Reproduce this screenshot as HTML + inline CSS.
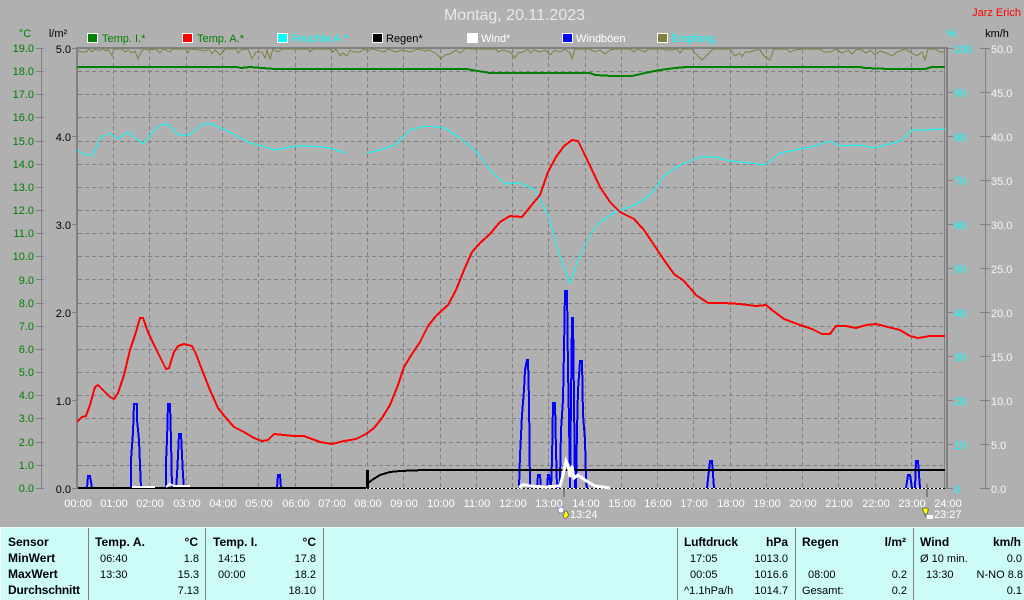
<!DOCTYPE html>
<html><head><meta charset="utf-8"><style>
html,body{margin:0;padding:0;background:#b0b0b0;width:1024px;height:600px;overflow:hidden}
svg{display:block;position:absolute;left:0;top:0}
text{font-family:"Liberation Sans",sans-serif;font-size:11px}
.g{fill:#008000}.c{fill:#00ffff}.w{fill:#fff}.k{fill:#000}.e{text-anchor:end}.m{text-anchor:middle}
.b{font-weight:bold;font-size:12px}
polyline,.cr{shape-rendering:crispEdges}
</style></head><body>
<svg width="1024" height="600" viewBox="0 0 1024 600">
<rect width="1024" height="600" fill="#b0b0b0"/>
<text x="514.5" y="20" class="m" style="font-size:16px" fill="#e8e8e8" textLength="141">Montag, 20.11.2023</text>
<text x="1021" y="16" class="e" fill="#ff0000">Jarz Erich</text>
<!-- units -->
<text x="25" y="37" class="m g">°C</text><text x="58" y="37" class="m k">l/m²</text>
<text x="951" y="37" class="m c">%</text><text x="997" y="37" class="m k" style="fill:#000">km/h</text>
<!-- legend -->
<g stroke="#fff" stroke-width="1">
<rect x="87.5" y="33.5" width="10" height="9" fill="#008000"/>
<rect x="182.5" y="33.5" width="10" height="9" fill="#ff0000"/>
<rect x="277.5" y="33.5" width="10" height="9" fill="#00ffff"/>
<rect x="372.5" y="33.5" width="10" height="9" fill="#000"/>
<rect x="467.5" y="33.5" width="10" height="9" fill="#fff"/>
<rect x="562.5" y="33.5" width="10" height="9" fill="#0000ff"/>
<rect x="657.5" y="33.5" width="10" height="9" fill="#808040"/>
</g>
<text x="102" y="42" class="g">Temp. I.*</text><text x="197" y="42" class="g">Temp. A.*</text>
<text x="291" y="42" class="c">Feuchte A.*</text><text x="386" y="42" class="k">Regen*</text>
<text x="481" y="42" class="w">Wind*</text><text x="576" y="42" class="w">Windböen</text>
<text x="671" y="42" class="c">Empfang</text>
<!-- grid -->
<g stroke="#808080" stroke-width="1" stroke-dasharray="4 3" shape-rendering="crispEdges" fill="none">
<path d="M78 71.5H944M78 94.5H944M78 117.5H944M78 141.5H944M78 164.5H944M78 187.5H944M78 210.5H944M78 233.5H944M78 256.5H944M78 279.5H944M78 303.5H944M78 326.5H944M78 349.5H944M78 372.5H944M78 395.5H944M78 418.5H944M78 442.5H944M78 465.5H944"/>
<path d="M113.5 49V488M149.5 49V488M186.5 49V488M222.5 49V488M258.5 49V488M295.5 49V488M331.5 49V488M367.5 49V488M403.5 49V488M440.5 49V488M476.5 49V488M512.5 49V488M548.5 49V488M585.5 49V488M621.5 49V488M657.5 49V488M693.5 49V488M730.5 49V488M766.5 49V488M802.5 49V488M838.5 49V488M875.5 49V488M911.5 49V488"/>
</g>
<g fill="#808080" shape-rendering="crispEdges">
<rect x="76" y="47" width="870" height="2"/>
<rect x="76" y="47" width="2" height="442"/>
<rect x="946" y="47" width="2" height="442"/>
<rect x="944" y="47" width="1" height="442"/>
<rect x="41" y="48" width="1" height="440"/>
<rect x="985" y="48" width="1" height="440"/>
<rect x="563" y="488" width="2" height="9"/>
<rect x="926" y="484" width="2" height="13"/>
</g>
<path stroke="#808080" stroke-width="1" shape-rendering="crispEdges" fill="none" d="M36 48.5H44M36 71.5H44M36 94.5H44M36 117.5H44M36 141.5H44M36 164.5H44M36 187.5H44M36 210.5H44M36 233.5H44M36 256.5H44M36 279.5H44M36 303.5H44M36 326.5H44M36 349.5H44M36 372.5H44M36 395.5H44M36 418.5H44M36 442.5H44M36 465.5H44M36 488.5H44M72 48.5H76M72 136.5H76M72 224.5H76M72 312.5H76M72 400.5H76M72 488.5H76M948 48.5H953M948 92.5H953M948 136.5H953M948 180.5H953M948 224.5H953M948 268.5H953M948 312.5H953M948 356.5H953M948 400.5H953M948 444.5H953M948 488.5H953M980 48.5H990M980 92.5H990M980 136.5H990M980 180.5H990M980 224.5H990M980 268.5H990M980 312.5H990M980 356.5H990M980 400.5H990M980 444.5H990M980 488.5H990"/>
<!-- left temp labels -->
<g class="g e">
<text x="34" y="52">19.0</text><text x="34" y="75">18.0</text><text x="34" y="98">17.0</text><text x="34" y="121">16.0</text><text x="34" y="145">15.0</text><text x="34" y="168">14.0</text><text x="34" y="191">13.0</text><text x="34" y="214">12.0</text><text x="34" y="237">11.0</text><text x="34" y="260">10.0</text><text x="34" y="284">9.0</text><text x="34" y="307">8.0</text><text x="34" y="330">7.0</text><text x="34" y="353">6.0</text><text x="34" y="376">5.0</text><text x="34" y="399">4.0</text><text x="34" y="422">3.0</text><text x="34" y="446">2.0</text><text x="34" y="469">1.0</text><text x="34" y="492">0.0</text>
</g>
<g class="k e">
<text x="71" y="53">5.0</text><text x="71" y="141">4.0</text><text x="71" y="229">3.0</text><text x="71" y="317">2.0</text><text x="71" y="405">1.0</text><text x="71" y="493">0.0</text>
</g>
<g class="c">
<text x="954" y="53">100</text><text x="954" y="97">90</text><text x="954" y="141">80</text><text x="954" y="185">70</text><text x="954" y="229">60</text><text x="954" y="273">50</text><text x="954" y="317">40</text><text x="954" y="361">30</text><text x="954" y="405">20</text><text x="954" y="449">10</text><text x="954" y="493">0</text>
</g>
<g fill="#f4f4f4">
<text x="991" y="53">50.0</text><text x="991" y="97">45.0</text><text x="991" y="141">40.0</text><text x="991" y="185">35.0</text><text x="991" y="229">30.0</text><text x="991" y="273">25.0</text><text x="991" y="317">20.0</text><text x="991" y="361">15.0</text><text x="991" y="405">10.0</text><text x="991" y="449">5.0</text><text x="991" y="493">0.0</text>
</g>
<g class="w m">
<text x="78" y="507">00:00</text><text x="114" y="507">01:00</text><text x="150" y="507">02:00</text><text x="187" y="507">03:00</text><text x="223" y="507">04:00</text><text x="259" y="507">05:00</text><text x="296" y="507">06:00</text><text x="332" y="507">07:00</text><text x="368" y="507">08:00</text><text x="404" y="507">09:00</text><text x="441" y="507">10:00</text><text x="477" y="507">11:00</text><text x="513" y="507">12:00</text><text x="549" y="507">13:00</text><text x="586" y="507">14:00</text><text x="622" y="507">15:00</text><text x="658" y="507">16:00</text><text x="694" y="507">17:00</text><text x="731" y="507">18:00</text><text x="767" y="507">19:00</text><text x="803" y="507">20:00</text><text x="839" y="507">21:00</text><text x="876" y="507">22:00</text><text x="912" y="507">23:00</text><text x="948" y="507">24:00</text>
</g>
<text x="570" y="518" class="w">13:24</text><text x="934" y="518" class="w">23:27</text>
<!-- icons -->
<g>
<circle cx="561" cy="510" r="3" fill="#fff" stroke="#8888cc" stroke-width="1"/>
<path d="M563 517L565 511L567 511L568 514L569 514L566 519Z" fill="#ffff00" stroke="#222" stroke-width=".5"/>
<path d="M923 508H928V511L927 514H925L923 511ZM925 514V517" fill="#ffff00" stroke="#333" stroke-width=".6"/>
<rect x="927" y="515" width="6" height="4" fill="#fff"/>
</g>
<!-- Empfang -->
<polyline fill="none" stroke="#808040" stroke-width="1" points="78,50 80,52 86,52 89,49 92,52 95,49 99,51 103,49 106,51 108,49 112,56 114,49 122,49 125,52 128,50 132,53 135,51 138,59 141,52 144,49 148,50 156,49 160,53 163,49 166,50 170,52 172,49 186,49 188,53 190,49 200,50 205,51 209,49 212,54 215,50 220,55 223,52 225,49 236,49 238,53 241,50 248,49 252,59 256,52 262,52 265,58 267,50 270,59 273,49 278,52 282,49 308,49 310,52 313,49 330,49 333,52 336,49 340,56 343,53 347,56 350,50 354,52 360,52 364,49 368,51 372,49 384,52 388,49 396,52 402,50 410,52 418,49 425,51 430,50 438,55 441,59 445,55 450,54 456,50 460,53 466,48 470,49 496,49 498,52 503,50 510,52 515,58 518,53 523,52 528,49 530,53 534,50 540,52 545,50 550,55 555,50 560,52 565,49 570,53 572,59 575,49 590,49 595,52 600,50 605,54 610,50 615,49 630,49 634,52 637,49 645,52 648,49 662,49 665,50 672,50 677,49 680,53 683,49 692,49 695,53 702,60 708,54 713,49 730,49 735,56 740,53 742,57 745,52 750,52 756,50 760,50 764,56 770,60 774,49 786,49 790,52 795,50 803,49 820,49 824,52 830,52 836,49 842,53 848,50 852,54 856,50 860,49 866,53 870,50 875,55 880,51 886,53 892,56 897,52 905,49 912,53 917,56 922,52 925,60 928,49 935,49 940,52 945,52"/>
<!-- humidity -->
<polyline fill="none" stroke="#00ffff" stroke-width="1" points="77,150 85,155 93,155 100,138 110,133 118,139 128,132 135,138 143,144 150,135 160,125 168,124 178,135 190,135 202,124 212,124 230,132 250,143 262,146 275,150 295,146 310,146 330,148 345,153"/>
<polyline fill="none" stroke="#00ffff" stroke-width="1" points="367,153 380,150 395,145 410,130 425,126 445,128 460,138 475,150 490,170 505,184 520,183 535,190 548,215 558,250 570,283 580,255 590,235 600,222 615,212 635,205 650,195 665,175 680,165 700,157 715,157 730,161 750,163 765,165 780,153 800,149 815,146 829,141 840,146 860,145 875,148 900,141 912,130 925,130 945,129"/>
<!-- temp I -->
<polyline fill="none" stroke="#008000" stroke-width="2" points="77,67 237,67 241,68 250,67 262,68 276,69 466,69 478,71 490,73 590,73 595,75 612,76 632,76 645,73 660,70 675,68 686,67 860,67 865,68 890,69 925,69 932,67 945,67"/>
<!-- temp A -->
<polyline fill="none" stroke="#ff0000" stroke-width="2" points="77,422 82,417 86,416 90,405 95,387 98,385 104,391 110,397 114,399 118,393 124,375 130,350 136,332 140,318 143,318 148,332 155,347 162,361 166,369 169,368 174,352 178,346 184,344 192,346 196,354 202,370 210,390 218,408 226,418 234,427 244,432 254,438 262,441 268,440 274,434 284,435 294,436 304,436 312,439 320,442 332,444 344,441 356,439 366,434 374,428 382,418 390,405 398,385 404,367 412,354 420,342 428,326 436,316 448,305 456,290 464,270 472,252 480,243 490,234 500,222 510,216 522,217 530,207 540,195 548,172 556,157 564,146 572,140 578,141 584,153 592,170 600,187 610,202 620,212 634,219 644,230 654,245 664,260 674,274 684,281 696,295 708,303 724,303 740,304 756,306 766,305 772,310 784,319 800,325 812,329 822,334 830,334 836,326 846,326 856,328 866,325 876,324 888,327 900,330 910,336 918,338 930,336 945,336"/>
<!-- gusts -->
<path class="cr" fill="none" stroke="#0000ff" stroke-width="2" d="M87 488L88 476H90L92 488M131 488V460L133 432L134 404H137L137 420L139 440L140 465L141 488M166 488V462L167 440L168 404H170L171 440L172 488M176 488L177 475L178 455L179 434H181L182 455L183 475L184 488M277 488L278 475H280L281 488M519 488L520 455L522 415L524 390L525 370L527 360H528L529 400L530 488M537 488L538 475H540L541 488M547 488L548 475H549L551 488L552 460L553 403H555L556 450L557 488M559 488L560 480L561 430L563 400L564 350L565 291H567L568 370L569 420L570 488M570 488L571 400L572 318H573L574 400L575 488M576 488L577 430L578 390L580 361H582L583 415L585 440L586 480L587 488M707 488L710 461H712L714 488M906 488L908 475H910L912 488M915 488L916 461H918L920 488"/>
<!-- rain -->
<path class="cr" d="M78 488H366" stroke="#000" stroke-width="2" fill="none"/>
<path class="cr" d="M367 488.5H945" stroke="#fff" stroke-width="1" fill="none"/>
<path class="cr" d="M367 488.5H945" stroke="#000" stroke-width="1" stroke-dasharray="2 2" fill="none"/>
<polyline fill="none" stroke="#000" stroke-width="2" points="367,484 372,480 380,475 390,472 400,471 424,470 945,470"/>
<rect x="366" y="470" width="3" height="18" fill="#000"/>
<!-- wind -->
<path fill="none" stroke="#fff" stroke-width="2" class="cr" d="M132 487H155M166 487L170 484L174 486H190"/>
<path fill="none" stroke="#fff" stroke-width="3" class="cr" d="M519 488L522 485H526L530 486L545 487L560 486L563 475L566 461L568 465L570 477L572 466L574 478L578 475L585 480L595 486L610 488"/>
<!-- panel -->
<rect x="0" y="527" width="1024" height="73" fill="#ccfbf8"/>
<rect x="0" y="527" width="1024" height="1" fill="#e8fdfc"/>
<rect x="0" y="527" width="1" height="73" fill="#fff"/>
<g fill="#808080" shape-rendering="crispEdges">
<rect x="88" y="528" width="1" height="72"/><rect x="205" y="528" width="1" height="72"/><rect x="323" y="528" width="1" height="72"/><rect x="677" y="528" width="1" height="72"/><rect x="795" y="528" width="1" height="72"/><rect x="913" y="528" width="1" height="72"/>
</g>
<g class="k">
<text x="8" y="546" class="b">Sensor</text><text x="8" y="562" class="b">MinWert</text><text x="8" y="578" class="b">MaxWert</text><text x="8" y="594" class="b" textLength="72">Durchschnitt</text>
<text x="95" y="546" class="b" textLength="50">Temp. A.</text><text x="198" y="546" class="e b">°C</text>
<text x="213" y="546" class="b">Temp. I.</text><text x="316" y="546" class="e b">°C</text>
<text x="684" y="546" class="b" textLength="54">Luftdruck</text><text x="788" y="546" class="e b">hPa</text>
<text x="802" y="546" class="b">Regen</text><text x="906" y="546" class="e b">l/m²</text>
<text x="920" y="546" class="b">Wind</text><text x="1021" y="546" class="e b">km/h</text>
<text x="100" y="562">06:40</text><text x="199" y="562" class="e">1.8</text>
<text x="100" y="578">13:30</text><text x="199" y="578" class="e">15.3</text>
<text x="199" y="594" class="e">7.13</text>
<text x="218" y="562">14:15</text><text x="316" y="562" class="e">17.8</text>
<text x="218" y="578">00:00</text><text x="316" y="578" class="e">18.2</text>
<text x="316" y="594" class="e">18.10</text>
<text x="690" y="562">17:05</text><text x="788" y="562" class="e">1013.0</text>
<text x="690" y="578">00:05</text><text x="788" y="578" class="e">1016.6</text>
<text x="684" y="594">^1.1hPa/h</text><text x="788" y="594" class="e">1014.7</text>
<text x="808" y="578">08:00</text><text x="907" y="578" class="e">0.2</text>
<text x="802" y="594">Gesamt:</text><text x="907" y="594" class="e">0.2</text>
<text x="920" y="562">Ø 10 min.</text><text x="1022" y="562" class="e">0.0</text>
<text x="926" y="578">13:30</text><text x="1023" y="578" class="e">N-NO 8.8</text>
<text x="1022" y="594" class="e">0.1</text>
</g>
</svg>
</body></html>
